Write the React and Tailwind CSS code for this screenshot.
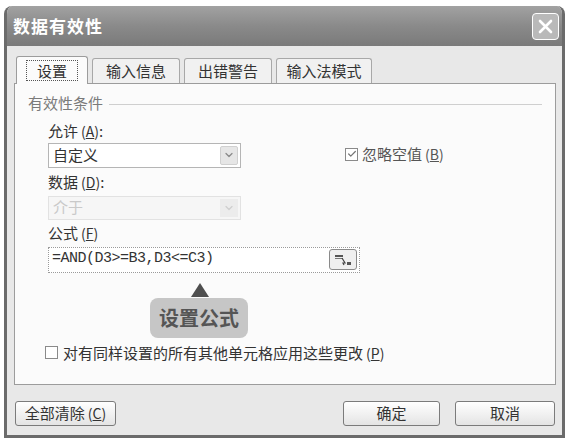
import { ChevronDown, Check } from "lucide-react";

const cjk = { fontFamily: '"Noto Sans CJK SC", "Noto Sans", sans-serif' };

const Key = ({ k }) => (
  <span className="text-[14px] ml-[3px]">
    (<span className="underline">{k}</span>)
  </span>
);

const Tab = ({ label, active, className }) => (
  <div
    className={
      active
        ? "h-[28px] flex items-center justify-center bg-[#fbfbfb] border border-b-0 border-[#9c9c9c] rounded-t-[3px] relative z-10 -mb-px " + className
        : "h-[25px] flex items-center justify-center bg-[#f1f1f1] border border-b-0 border-[#a8a8a8] rounded-t-[3px] " + className
    }
  >
    {active ? (
      <span className="px-[10px] h-[21px] leading-[19px] border border-dotted border-[#555] text-[15px] text-[#333]">{label}</span>
    ) : (
      <span className="text-[15px] text-[#333]">{label}</span>
    )}
  </div>
);

const Button = ({ children, className }) => (
  <button className={"h-[25px] border border-[#7b7b7b] rounded-[3px] bg-gradient-to-b from-[#ffffff] to-[#e4e4e4] text-[15px] text-[#333] flex items-center justify-center " + className}>
    {children}
  </button>
);

export default function App() {
  return (
    <div className="w-[573px] h-[445px] bg-white pt-[6px] pl-[4px] overflow-hidden" style={cjk}>
      <div className="w-[561px] h-[432px] flex flex-col rounded-t-[8px] overflow-hidden border-[3px] border-t-0 border-[#6b6b6b] bg-[#e8e8e8]">
        {/* title bar */}
        <div className="h-[40px] shrink-0 flex items-center justify-between pl-[6px] pr-[3px] bg-gradient-to-b from-[#a2a2a2] via-[#8a8a8a] to-[#7a7a7a]">
          <span className="text-[17px] font-bold text-white tracking-[1px]">数据有效性</span>
          <div className="w-[27px] h-[27px] rounded-[4px] border border-white bg-[#b9b9b9] flex items-center justify-center">
            <svg width="17" height="17" viewBox="0 0 17 17">
              <path d="M3 3 L14 14 M14 3 L3 14" stroke="white" strokeWidth="2.6" strokeLinecap="round" />
            </svg>
          </div>
        </div>

        {/* body */}
        <div className="flex-1 flex flex-col pl-[7px] pr-[6px] pt-[9px]">
          <div className="flex items-end h-[28px] gap-[4px] pl-[2px]">
            <Tab label="设置" active className="w-[72px]" />
            <Tab label="输入信息" className="w-[88px]" />
            <Tab label="出错警告" className="w-[88px]" />
            <Tab label="输入法模式" className="w-[96px]" />
          </div>

          <div className="h-[302px] bg-[#fbfbfb] border border-[#9c9c9c] flex flex-col px-[13px] pt-[8px]">
            <div className="flex items-center gap-[6px]">
              <span className="text-[15px] text-[#7a7a7a]">有效性条件</span>
              <div className="flex-1 border-t border-[#cfcfcf] mt-[2px]" />
            </div>

            <div className="pl-[20px] flex flex-col">
              <div className="mt-[7px] h-[20px] flex items-center text-[15px] text-[#333]">
                允许<Key k="A" />:
              </div>
              <div className="flex items-center mt-[1px]">
                <div className="w-[193px] h-[25px] border border-[#b5b5b5] bg-white flex items-center justify-between pl-[4px] pr-[2px]">
                  <span className="text-[15px] text-[#333]">自定义</span>
                  <div className="w-[18px] h-[19px] rounded-[2px] bg-[#e6e6e6] border border-[#d0d0d0] flex items-center justify-center">
                    <ChevronDown size={12} strokeWidth={2.5} color="#8a8a8a" />
                  </div>
                </div>
                <div className="ml-[104px] mt-[-2px] flex items-center gap-[4px]">
                  <div className="w-[13px] h-[13px] border border-[#8a8a8a] bg-white flex items-center justify-center">
                    <Check size={10} strokeWidth={3} color="#777" />
                  </div>
                  <span className="text-[15px] text-[#555]">
                    忽略空值<Key k="B" />
                  </span>
                </div>
              </div>

              <div className="mt-[5px] h-[20px] flex items-center text-[15px] text-[#333]">
                数据<Key k="D" />:
              </div>
              <div className="mt-[3px] w-[193px] h-[24px] border border-[#e2e2e2] bg-[#f6f6f6] flex items-center justify-between pl-[4px] pr-[2px]">
                <span className="text-[15px] text-[#c9c9c9]">介于</span>
                <div className="w-[18px] h-[18px] bg-[#ececec] flex items-center justify-center">
                  <ChevronDown size={12} strokeWidth={2.5} color="#cfcfcf" />
                </div>
              </div>

              <div className="mt-[4px] h-[20px] flex items-center text-[15px] text-[#333]">
                公式<Key k="F" />
              </div>
              <div className="mt-[3px] w-[312px] h-[26px] border border-dotted border-[#9a9a9a] bg-white flex items-center justify-between pl-[3px] pr-[2px]">
                <span className="text-[15px] text-[#333] tracking-[-0.5px]" style={{ fontFamily: '"Liberation Mono", monospace' }}>
                  =AND(D3&gt;=B3,D3&lt;=C3)
                </span>
                <div className="w-[28px] h-[21px] rounded-[3px] border border-[#8a8a8a] bg-[#efefef] flex items-center justify-center">
                  <svg width="18" height="12" viewBox="0 0 18 12">
                    <rect x="1" y="1" width="8" height="2" fill="#555" />
                    <rect x="1" y="4" width="8" height="1" fill="#777" />
                    <path d="M8 4 L11 9 L9 9 L10 11" stroke="#444" strokeWidth="1.2" fill="none" />
                    <rect x="13" y="8" width="4" height="3" fill="#555" />
                  </svg>
                </div>
              </div>

              <div className="ml-[143px] mt-[10px] w-0 h-0 border-l-[9px] border-r-[9px] border-b-[14px] border-l-transparent border-r-transparent border-b-[#4f4f4f]" />
              <div className="ml-[102px] mt-[1px] w-[98px] h-[40px] rounded-[8px] bg-[#c6c6c6] flex items-center justify-center">
                <span className="text-[20px] font-bold text-[#555]">设置公式</span>
              </div>
            </div>

            <div className="mt-[4px] pl-[17px] flex items-center gap-[5px]">
              <div className="w-[13px] h-[13px] border border-[#8a8a8a] bg-white" />
              <span className="text-[15px] text-[#333]">
                对有同样设置的所有其他单元格应用这些更改<Key k="P" />
              </span>
            </div>
          </div>

          <div className="mt-[16px] flex items-center">
            <Button className="w-[101px] ml-px">
              全部清除<Key k="C" />
            </Button>
            <Button className="w-[97px] ml-[227px]">确定</Button>
            <Button className="w-[100px] ml-[15px]">取消</Button>
          </div>
        </div>
      </div>
    </div>
  );
}
